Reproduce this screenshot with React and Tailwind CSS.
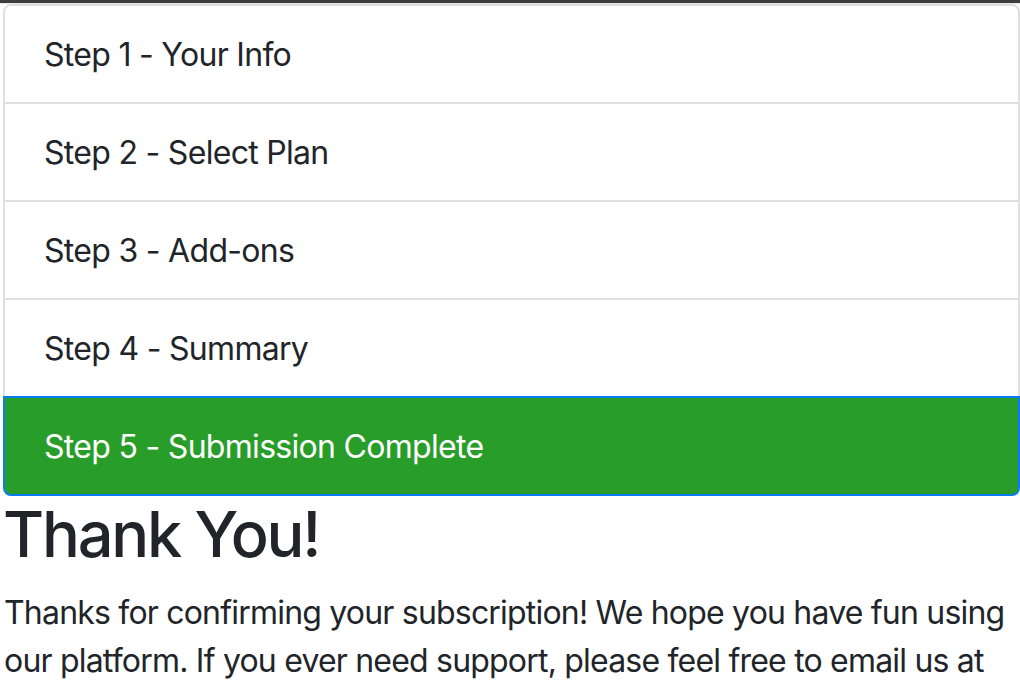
export default function App() {
    const steps = [
        "Step 1 - Your Info",
        "Step 2 - Select Plan",
        "Step 3 - Add-ons",
        "Step 4 - Summary",
    ];

    return (
        <div className="h-[680px] overflow-hidden bg-white text-[#212529] font-['Inter','Liberation_Sans',sans-serif]">
            <div className="h-[3px] bg-[#3d3d3f]"></div>
            <div className="h-px bg-[#e6e6e6]"></div>
            <div className="pl-[3px] w-[1020px]">
                <ul className="flex flex-col tracking-[-0.7px]">
                    {steps.map((s, i) => (
                        <li
                            key={s}
                            className={
                                i === 0
                                    ? "border-2 border-[#dfdfdf] rounded-t-[8px] pl-[39px] pr-[40px] pt-[25px] pb-[23px] text-[32px] leading-[48px]"
                                    : "border-2 border-t-0 border-[#dfdfdf] pl-[39px] pr-[40px] pt-[25px] pb-[23px] text-[32px] leading-[48px]"
                            }
                        >
                            {s}
                        </li>
                    ))}
                    <li className="-mt-[2px] border-2 border-[#0a7bf5] bg-[#289d29] text-white rounded-b-[8px] pl-[39px] pr-[40px] pt-[25px] pb-[23px] text-[32px] leading-[48px]">
                        Step 5 - Submission Complete
                    </li>
                </ul>
                <h1 className="mt-0 mb-[16px] text-[63px] leading-[77px] font-medium tracking-[-2.2px]">Thank You!</h1>
                <p className="text-[32px] leading-[48px] pl-[1px] tracking-[-0.8px]">
                    Thanks for confirming your subscription! We hope you have fun using our platform. If you ever need support, please feel free to email us at support@loremgaming.com.
                </p>
            </div>
        </div>
    );
}
